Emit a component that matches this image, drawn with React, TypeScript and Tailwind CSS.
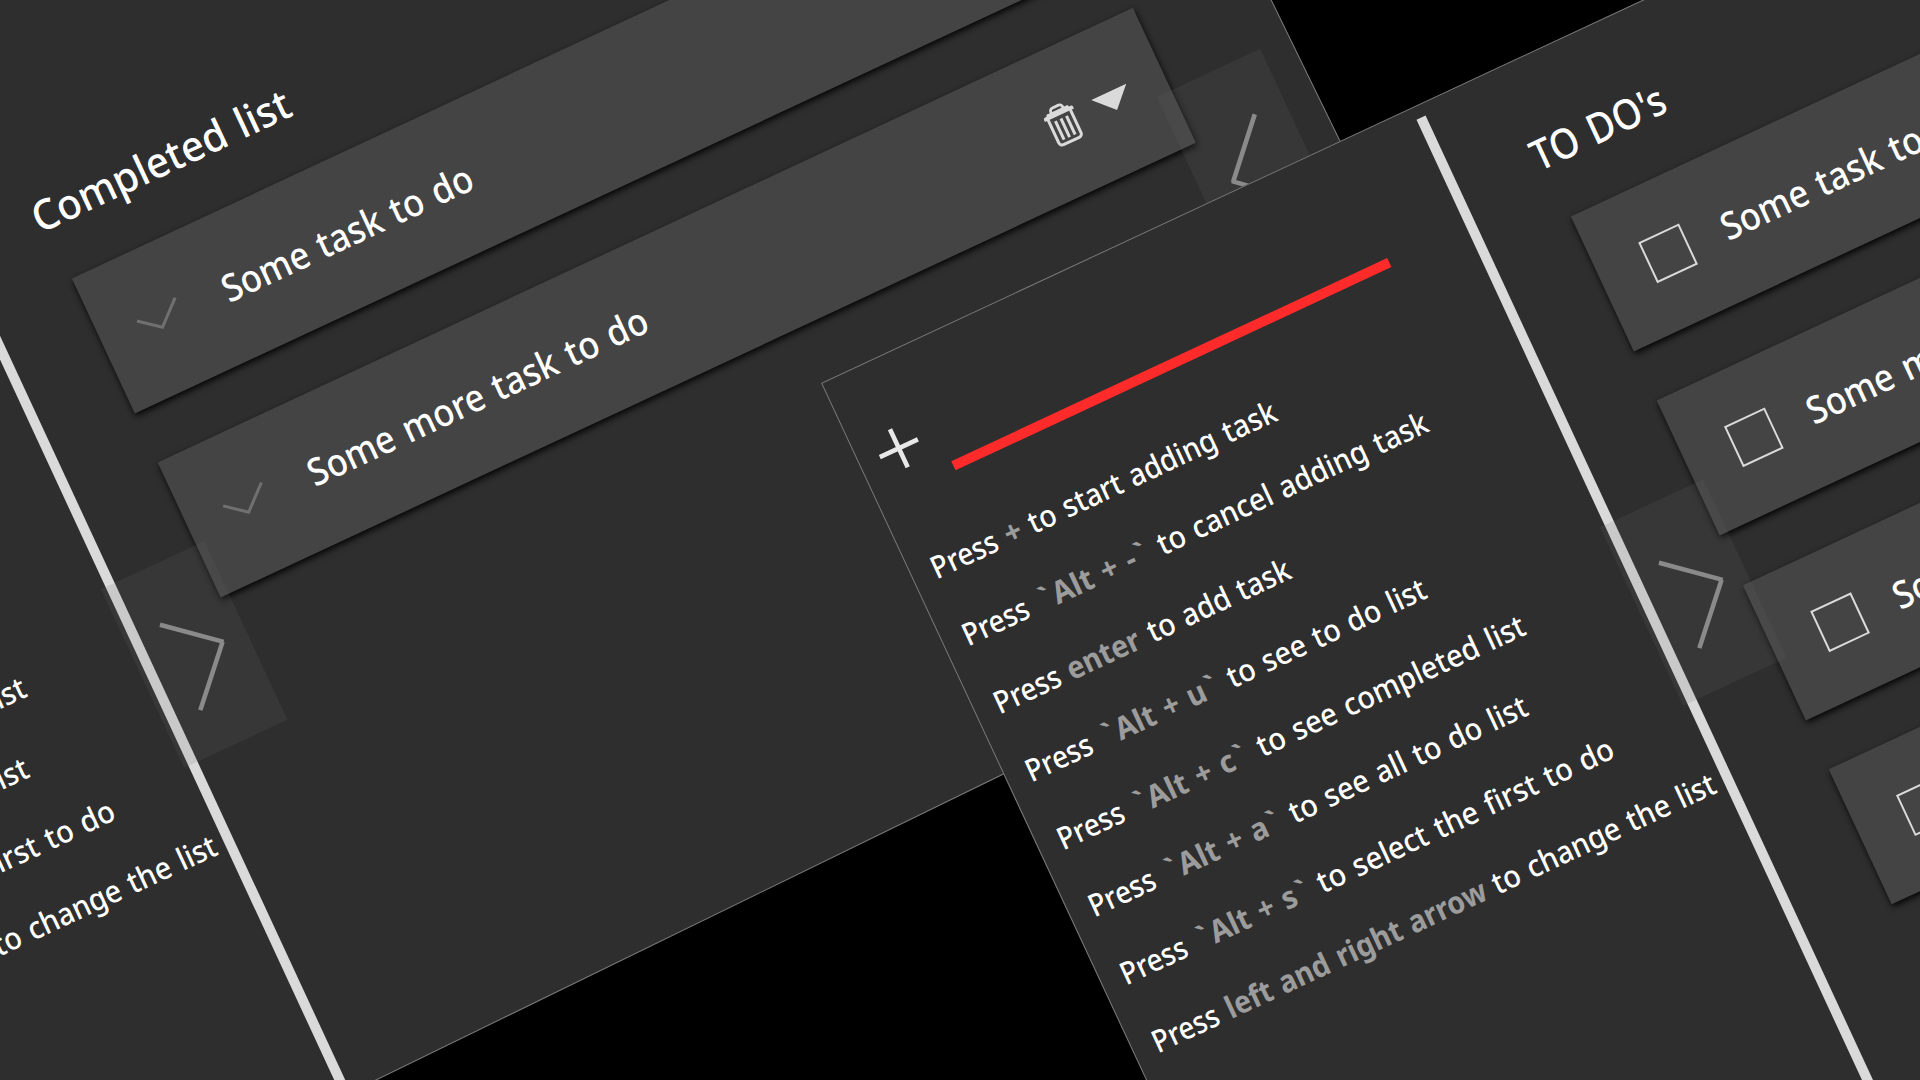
import { useLayoutEffect, useRef, useState } from "react";

type Segment = { text: string; from: number; to: number; key?: boolean };

// Horizontally fits a run of text to a given advance width.
function Fit({ text, width }: { text: string; width: number }) {
  const ref = useRef<HTMLSpanElement>(null);
  const [scale, setScale] = useState(1);
  useLayoutEffect(() => {
    if (ref.current) setScale(width / ref.current.offsetWidth);
  }, [text, width]);
  const quoted = text.startsWith("`");
  return (
    <span className="block shrink-0" style={{ width }}>
      <span
        ref={ref}
        className="inline-block origin-left whitespace-pre [word-spacing:0.07em]"
        style={{ transform: `scaleX(${scale})` }}
      >
        {quoted ? (
          <>
            <span className="mr-[0.09em]">`</span>
            {text.slice(1, -1)}
            <span className="ml-[0.06em]">`</span>
          </>
        ) : (
          text
        )}
      </span>
    </span>
  );
}

const hint = (k: string, kFrom: number, kTo: number, rest: string, from: number, to: number): Segment[] => [
  { text: "Press", from: 22, to: 92.5 },
  { text: k, from: kFrom, to: kTo, key: true },
  { text: rest, from, to },
];

const HINTS: Segment[][] = [
  hint("+", 101.5, 119, "to start adding task", 129, 399.5),
  hint("`Alt + -`", 107, 224, "to cancel adding task", 237, 532),
  hint("enter", 101.5, 179, "to add task", 191, 345.5),
  hint("`Alt + u`", 107, 231, "to see to do list", 244, 460.5),
  hint("`Alt + c`", 107, 228, "to see completed list", 241.5, 534.5),
  hint("`Alt + a`", 107, 229.5, "to see all to do list", 242.5, 502.5),
  hint("`Alt + s`", 107, 226.5, "to select the first to do", 239, 563.5),
  hint("left and right arrow", 102.5, 387, "to change the list", 397, 640.5),
];

function HintRow({ segments }: { segments: Segment[] }) {
  return (
    <li className="flex h-[74.8px] text-[31px] leading-[74.8px]">
      {segments.map((s, i) => (
        <div
          key={i}
          className={s.key ? "shrink-0 font-bold text-[#9c9c9c]" : "shrink-0"}
          style={{ marginLeft: s.from - (i ? segments[i - 1].to : 0) }}
        >
          <Fit text={s.text} width={s.to - s.from} />
        </div>
      ))}
    </li>
  );
}

function TrashIcon() {
  return (
    <svg viewBox="0 0 36 42" className="h-[42px] w-[36px]" fill="none" stroke="#dadada">
      <path d="M11.500 6.500V5a3.200 3.200 0 0 1 3.200-3.200h6.600A3.200 3.200 0 0 1 24.500 5v1.500" strokeWidth="2.800" />
      <path d="M2 11.500V9.500a2 2 0 0 1 2-2h1.500l1-2h23l1 2H32a2 2 0 0 1 2 2v2z" fill="#dadada" stroke="none" />
      <path d="M5.700 10v26.200a3.600 3.600 0 0 0 3.600 3.600h17.400a3.600 3.600 0 0 0 3.600-3.600V10" strokeWidth="3" />
      <path d="M11.900 15v20.500M18 15v20.500M24.100 15v20.500" strokeWidth="3" />
    </svg>
  );
}

function Card({ text, width, done }: { text: string; width: number; done: boolean }) {
  return (
    <li className="flex h-[149px] w-[1076px] items-center bg-[#444444] shadow-[0_3px_6px_rgba(0,0,0,0.9)]">
      {done ? (
        <svg viewBox="0 0 50 30" className="ml-[39px] h-[30px] w-[50px]" fill="none" stroke="#707070" strokeWidth="3">
          <path d="M2 7 22.500 23.500 46.500 2" />
        </svg>
      ) : (
        <div className="ml-[50px] size-[45px] border-2 border-[#dadada]" />
      )}
      <div className={done ? "ml-[43px] text-[38px]" : "ml-[37px] text-[38px]"}>
        <Fit text={text} width={width} />
      </div>
      <div className="mr-[37.500px] ml-auto flex items-center gap-[17.500px] pt-[3px]">
        <TrashIcon />
        <svg viewBox="0 0 39 20" className="h-[20px] w-[39px]" fill="#dadada">
          <path d="M0 0h39L19.500 20z" />
        </svg>
      </div>
    </li>
  );
}

function NavArrow({ left }: { left?: boolean }) {
  return (
    <div
      className={
        left
          ? "absolute top-[459.500px] left-[1810px] h-[197px] w-[114px] bg-[#6a6a6a]/15"
          : "absolute top-[459.500px] left-[645px] h-[197px] w-[114px] bg-[#6a6a6a]/15"
      }
    >
      <svg viewBox="0 0 114 197" className="size-full" fill="none" stroke="#8a8a8a" strokeWidth="4.600">
        {left ? (
          <path d="M81.500 57 33 109.500M32.500 108 81.500 150.500" />
        ) : (
          <path d="M38.500 57 89 99.500M88 99 39 151.500" />
        )}
      </svg>
    </div>
  );
}

type Task = { text: string; width: number };

function Screen({ title, titleWidth, tasks, done }: { title: string; titleWidth: number; tasks: Task[]; done: boolean }) {
  return (
    <>
      <div className="flex h-full">
        <section className="w-[650.500px] shrink-0 pt-[70px]">
          <div className="flex h-[107.500px] gap-[20px] pl-[21px]">
            <svg viewBox="0 0 44 44" className="size-[44px]" stroke="#e8e8e8" strokeWidth="4.600">
              <path d="M1 22h42M22 1v42" />
            </svg>
            <div className="mt-[56px] h-[10px] w-[481px] bg-[#ff2a2a]" />
          </div>
          <ul>
            {HINTS.map((segments, i) => (
              <HintRow key={i} segments={segments} />
            ))}
          </ul>
        </section>
        <div className="mt-[13px] h-[1300px] w-[10px] shrink-0 origin-top rotate-[0.115deg] bg-[#dadada]" />
        <section className="w-[1280px] shrink-0 pt-[66px]">
          <h1 className="pl-[79.500px] text-[42px] leading-[60px]">
            <Fit text={title} width={titleWidth} />
          </h1>
          <ul className="mt-[39.500px] ml-[89px] flex flex-col gap-[54.500px]">
            {tasks.map((t, i) => (
              <Card key={i} text={t.text} width={t.width} done={done} />
            ))}
          </ul>
        </section>
      </div>
      <NavArrow />
      {done && <NavArrow left />}
    </>
  );
}

const SHORT = { text: "Some task to do", width: 273 };
const LONG = { text: "Some more task to do", width: 371.5 };

export default function App() {
  return (
    <main className="relative h-[1080px] w-[1920px] overflow-hidden bg-black font-['Noto_Sans',sans-serif] font-medium text-white">
      <div className="absolute top-0 left-0 size-0 origin-top-left -rotate-[26deg]">
        <div className="absolute -top-[300px] -left-[800px] h-[1436px] w-[1943px] border border-[#787878] bg-[#2e2e2e]" />
      </div>
      <div className="absolute top-[445px] left-[-677.800px] h-[1200px] w-[1958px] origin-top-left -rotate-[25deg]">
        <div className="h-[1000px]">
          <Screen title="Completed list" titleWidth={281} tasks={[SHORT, LONG]} done />
        </div>
      </div>
      <div className="absolute top-[383px] left-[821px] h-[1300px] w-[1958px] origin-top-left -rotate-[25deg] bg-[#2e2e2e] outline outline-1 -outline-offset-1 outline-[#787878]">
        <Screen title="TO DO's" titleWidth={144} tasks={[SHORT, LONG, SHORT, LONG]} done={false} />
      </div>
    </main>
  );
}
